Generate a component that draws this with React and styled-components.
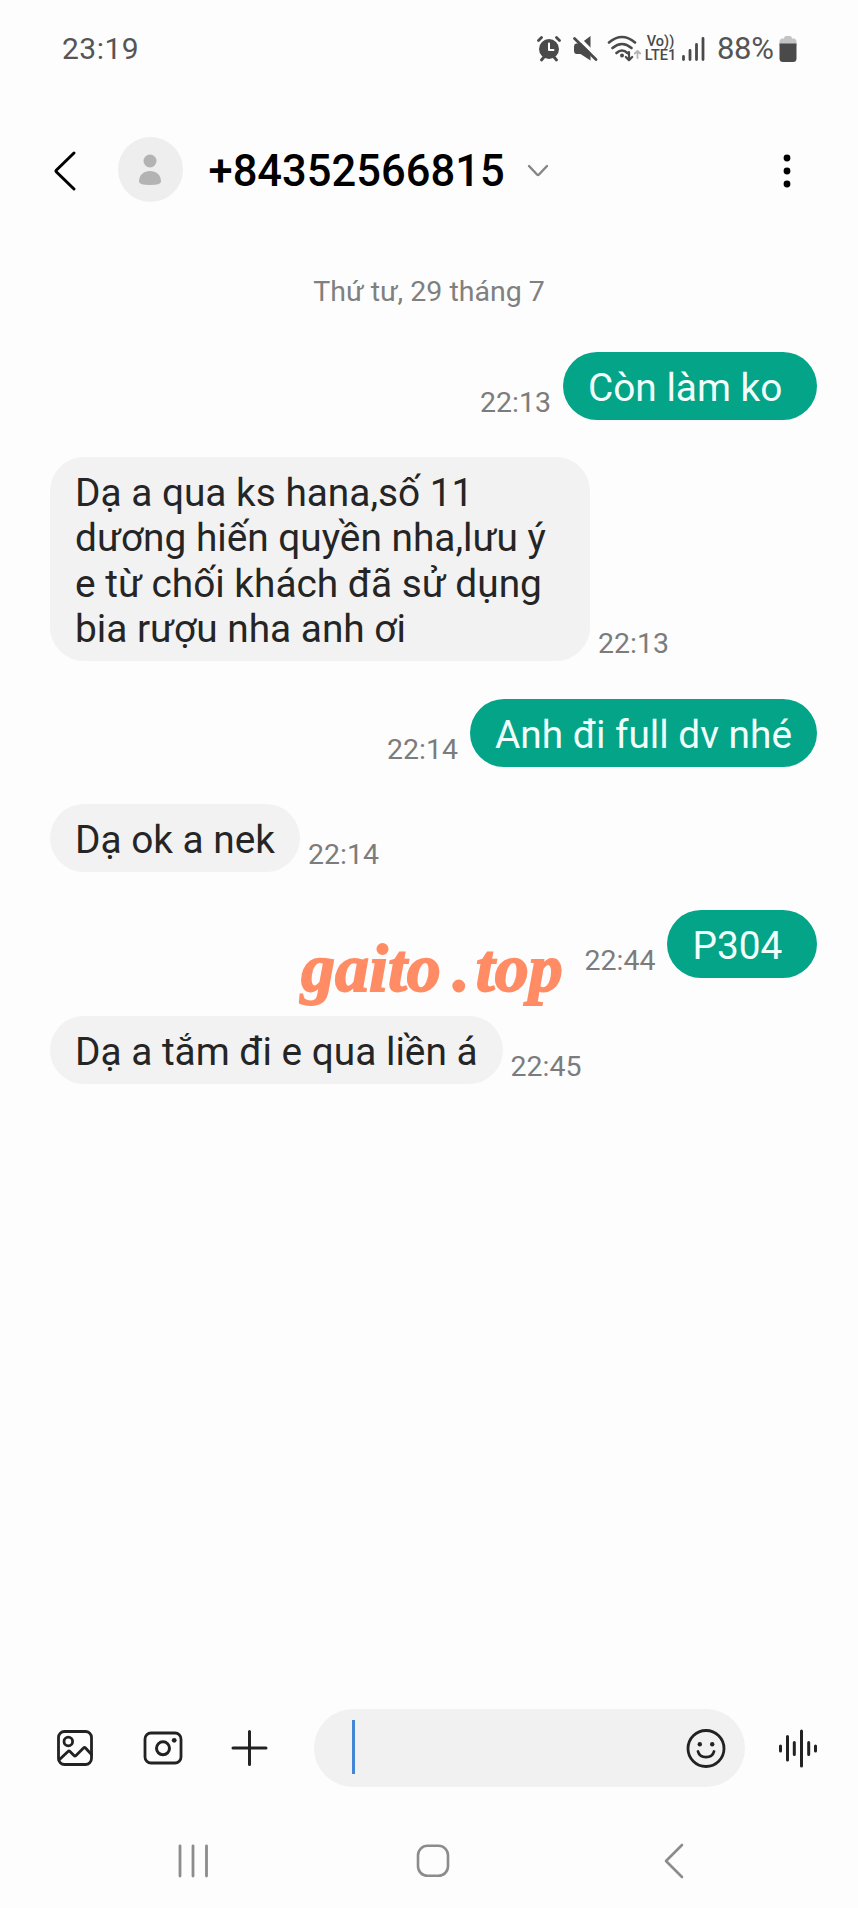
import styled, { createGlobalStyle, css } from "styled-components";

const GlobalStyle = createGlobalStyle`
  * {
    box-sizing: border-box;
  }
  body {
    margin: 0;
    background: #fdfdfd;
    font-family: Roboto, "Noto Sans", sans-serif;
  }
  svg {
    display: block;
    flex-shrink: 0;
  }
`;

const Screen = styled.div`
  position: relative;
  display: flex;
  flex-direction: column;
  width: 858px;
  height: 1908px;
  background: #fdfdfd;
  overflow: hidden;
`;

const StatusBar = styled.header`
  display: flex;
  justify-content: space-between;
  align-items: center;
  height: 97px;
  padding: 0 61px 0 62px;
  color: #555;
  font-size: 30px;
`;

const Clock = styled.span`
  letter-spacing: 0.5px;
`;

const StatusIcons = styled.div`
  display: flex;
  align-items: center;
`;

const Battery = styled.span`
  width: 58px;
  margin: 0 4px 0 12px;
  font-size: 31px;
  letter-spacing: -0.3px;
`;

const Network = styled.div`
  display: flex;
  flex-direction: column;
  align-items: center;
  width: 31px;
  margin-right: 5px;
  font-size: 14.5px;
  font-weight: 500;
  line-height: 13.6px;
  color: #4a4a4a;
`;

const ChatHeader = styled.div`
  display: flex;
  align-items: center;
  height: 147px;
  padding: 0 66px 0 53px;
`;

const Avatar = styled.div`
  display: flex;
  align-items: center;
  justify-content: center;
  width: 65px;
  height: 65px;
  margin: 0 0 2px 40.5px;
  border-radius: 50%;
  background: #eeeeee;
`;

const Phone = styled.h1`
  margin: 2px 0 0 26px;
  font-size: 43.5px;
  font-weight: 500;
  line-height: 52px;
  color: #000;
`;

const Chevron = styled.svg`
  margin-left: 21px;
`;

const Spacer = styled.div`
  flex: 1;
`;

const DateLabel = styled.div`
  height: 107.5px;
  padding-top: 31px;
  text-align: center;
  font-size: 28.5px;
  line-height: 33px;
  color: #808080;
`;

const Messages = styled.main`
  display: flex;
  flex: 1;
  flex-direction: column;
  gap: 37.5px;
  padding: 0 41px 0 50px;
`;

const MessageRow = styled.div`
  display: flex;
  align-items: flex-end;
  flex-direction: ${({ $sent }) => ($sent ? "row-reverse" : "row")};
  gap: ${({ $sent }) => ($sent ? "12px" : "8px")};
`;

const Bubble = styled.div`
  max-width: 540px;
  padding: 13px 25px 10px;
  border-radius: 34px;
  background: #f2f2f2;
  color: #252525;
  font-size: 38.8px;
  line-height: 45.2px;
  white-space: pre-wrap;
  ${({ $wide }) =>
    $wide &&
    css`
      width: 540px;
    `}
  ${({ $sent }) =>
    $sent &&
    css`
      background: #03a487;
      color: #f1fffc;
    `}
`;

const Time = styled.time`
  font-size: 28.5px;
  line-height: 34px;
  color: #7c7c7c;
`;

const Watermark = styled.div`
  position: absolute;
  top: 930px;
  left: 301px;
  display: flex;
  font-family: "Liberation Serif", serif;
  font-size: 68px;
  font-style: italic;
  font-weight: 700;
  line-height: 76px;
  color: #ff8c64;
  -webkit-text-stroke: 1.8px #ff8c64;
  white-space: nowrap;
`;

const Dot = styled.span`
  margin: 0 6px 0 12px;
`;

const Composer = styled.footer`
  display: flex;
  align-items: center;
  height: 78px;
  padding: 0 40px 0 55px;
  color: #222;
`;

const Tools = styled.div`
  display: flex;
  align-items: center;
  gap: 46.5px;
  width: 259px;
`;

const Input = styled.div`
  display: flex;
  align-items: center;
  justify-content: space-between;
  width: 431px;
  height: 78px;
  margin-right: 33px;
  padding: 0 18px 0 38px;
  border-radius: 39px;
  background: #f1f1f1;
`;

const Caret = styled.span`
  width: 3px;
  height: 54px;
  margin-bottom: 2px;
  background: #4187d6;
`;

const NavBar = styled.nav`
  display: flex;
  align-items: center;
  height: 121px;
  padding: 26px 0 0 176px;
  color: #8c8c8c;
`;

const HomeKey = styled.svg`
  margin: 0 211px 0 205px;
`;

const messages = [
  { text: "Còn làm ko ", time: "22:13", sent: true },
  {
    text: "Dạ a qua ks hana,số 11\ndương hiến quyền nha,lưu ý\ne từ chối khách đã sử dụng\nbia rượu nha anh ơi",
    time: "22:13",
    wide: true,
  },
  { text: "Anh đi full dv nhé", time: "22:14", sent: true },
  { text: "Dạ ok a nek", time: "22:14" },
  { text: "P304 ", time: "22:44", sent: true },
  { text: "Dạ a tắm đi e qua liền á", time: "22:45" },
];

const line = {
  fill: "none",
  stroke: "currentColor",
  strokeLinecap: "round",
  strokeLinejoin: "round",
};

function StatusGlyphs() {
  return (
    <svg width="108" height="30" viewBox="0 0 108 30" color="#4a4a4a">
      {/* alarm */}
      <circle cx="12" cy="15" r="10" fill="currentColor" />
      <path d="M1.500 6.500 4.500 3.500M22.500 6.500l-3-3M4.500 26l2.500-3M19.500 26l-2.500-3" {...line} strokeWidth="2.800" />
      <path d="M12 9.500v6.500h4.500" {...line} stroke="#fff" strokeWidth="2" />
      {/* muted speaker */}
      <path d="M39 9.500h4.500L53.500 2v24.500L43.500 20H39q-2-.5-2-3v-4.500q0-2.500 2-3z" fill="currentColor" />
      <path d="M39 1.500 62 24.500" stroke="#fdfdfd" strokeWidth="3.500" />
      <path d="M37.500 4.500 59 25.500" {...line} strokeWidth="2.800" />
      {/* wifi */}
      <path d="M72 8.500q13-11 26 0M75.500 14q9.500-8 19 0M79.500 19q5.500-5 11 0" {...line} strokeWidth="2.600" />
      <circle cx="85" cy="21.500" r="2" fill="currentColor" />
      <path d="M92 18v8m-3.200-3 3.200 3.200 3.200-3.200" {...line} strokeWidth="2.200" />
      <path d="M100.500 24v-7m-2.700 2.500 2.700-2.700 2.700 2.700" {...line} stroke="#b5b5b5" strokeWidth="1.800" />
    </svg>
  );
}

function Signal() {
  return (
    <svg width="24" height="26" viewBox="0 0 24 26">
      <path d="M2.500 20.500v3M9 14.500v9M15.500 8.500v15M22 2.500v21" {...line} stroke="#4a4a4a" strokeWidth="2.800" />
    </svg>
  );
}

function BatteryIcon() {
  return (
    <svg width="18" height="28" viewBox="0 0 18 28">
      <path d="M5 3.500Q5 1 7 1h4q2 0 2 2.500h1.500Q17.500 3.500 17.500 7v4H.5V7Q.5 3.500 3.500 3.500z" fill="#c4c4c4" />
      <path d="M.5 8.500h17v15q0 3.500-3.500 3.500H4Q.5 27 .5 23.500z" fill="#4a4a4a" />
    </svg>
  );
}

function App() {
  return (
    <>
      <GlobalStyle />
      <Screen>
        <StatusBar>
          <Clock>23:19</Clock>
          <StatusIcons>
            <StatusGlyphs />
            <Network>
              <span>Vo))</span>
              <span>LTE1</span>
            </Network>
            <Signal />
            <Battery>88%</Battery>
            <BatteryIcon />
          </StatusIcons>
        </StatusBar>
        <ChatHeader>
          <svg width="24" height="42" viewBox="0 0 24 42">
            <path d="M21 3 3.500 20Q2.500 21 3.500 22L21 39" {...line} stroke="#000" strokeWidth="3" />
          </svg>
          <Avatar>
            <svg width="24" height="34" viewBox="0 0 24 34">
              <circle cx="12" cy="8" r="6.500" fill="#b3b3b3" />
              <path d="M1 28.500C1 22 6 18 12 18s11 4 11 10.500Q23 32 12 32T1 28.500z" fill="#b3b3b3" />
            </svg>
          </Avatar>
          <Phone>+84352566815</Phone>
          <Chevron width="24" height="16" viewBox="0 0 24 16">
            <path d="m3 3 8 8.500q1 1 2 0L21 3" {...line} stroke="#858585" strokeWidth="2.400" />
          </Chevron>
          <Spacer />
          <svg width="10" height="36" viewBox="0 0 10 36">
            <circle cx="5" cy="5" r="3.400" />
            <circle cx="5" cy="18" r="3.400" />
            <circle cx="5" cy="31" r="3.400" />
          </svg>
        </ChatHeader>
        <DateLabel>Thứ tư, 29 tháng 7</DateLabel>
        <Messages>
          {messages.map((message) => (
            <MessageRow key={message.text} $sent={message.sent}>
              <Bubble $sent={message.sent} $wide={message.wide}>
                {message.text}
              </Bubble>
              <Time>{message.time}</Time>
            </MessageRow>
          ))}
        </Messages>
        <Composer>
          <Tools>
            <svg width="40" height="40" viewBox="0 0 40 40">
              <rect x="3.500" y="3.500" width="33" height="33" rx="6" {...line} strokeWidth="2.800" />
              <circle cx="13.300" cy="13.500" r="4.300" {...line} strokeWidth="2.800" />
              <path d="m4 32 9-8.500q1-1 2 0l4 4q1 1 2 0l7.500-7.500q1-1 2 0L36.500 26.500" {...line} strokeWidth="2.800" />
            </svg>
            <svg width="42" height="40" viewBox="0 0 42 40">
              <rect x="3" y="5" width="36" height="30" rx="6" {...line} strokeWidth="2.800" />
              <circle cx="21" cy="20.300" r="6.500" {...line} strokeWidth="3" />
              <circle cx="32.200" cy="12.300" r="2.400" fill="currentColor" />
            </svg>
            <svg width="40" height="40" viewBox="0 0 40 40">
              <path d="M19.500 3.500v33M3 20h33" {...line} strokeWidth="3" />
            </svg>
          </Tools>
          <Input>
            <Caret />
            <svg width="42" height="42" viewBox="0 0 42 42">
              <circle cx="21" cy="21.500" r="18" {...line} strokeWidth="2.800" />
              <circle cx="14.800" cy="17.300" r="2.200" fill="currentColor" />
              <circle cx="27.200" cy="17.300" r="2.200" fill="currentColor" />
              <path d="M13 24.500c2 7.500 14 7.500 16 0" {...line} strokeWidth="2.800" />
            </svg>
          </Input>
          <svg width="40" height="42" viewBox="0 0 40 42">
            <path d="M2.500 19v5M9.500 9.500v23.500M16.300 15.500v12M23.500 4v35M30.700 15.500v12M37.500 19v5" {...line} strokeWidth="3" />
          </svg>
        </Composer>
        <NavBar>
          <svg width="34" height="38" viewBox="0 0 34 38">
            <path d="M4 4v30M17 4v30M30.500 4v30" {...line} strokeWidth="2.800" />
          </svg>
          <HomeKey width="36" height="38" viewBox="0 0 36 38">
            <rect x="3" y="3.800" width="30" height="30" rx="9.500" {...line} strokeWidth="2.600" />
          </HomeKey>
          <svg width="24" height="40" viewBox="0 0 24 40">
            <path d="M20 4 4 20l16 16" {...line} strokeWidth="2.600" />
          </svg>
        </NavBar>
        <Watermark>
          gaito<Dot>.</Dot>top
        </Watermark>
      </Screen>
    </>
  );
}

export default App;
